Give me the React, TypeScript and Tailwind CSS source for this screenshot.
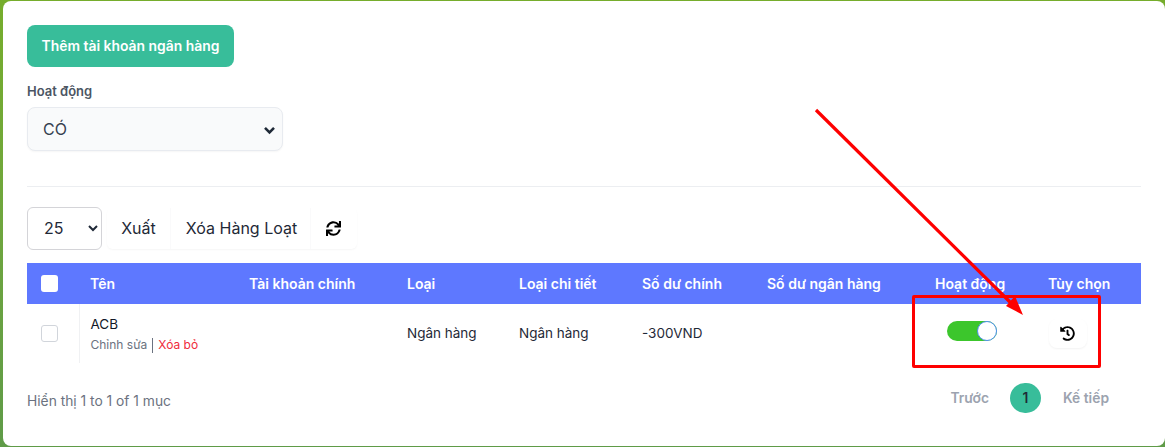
import { FaHistory, FaSync } from "react-icons/fa";

const heads = ["Tên", "Tài khoản chính", "Loại", "Loại chi tiết", "Số dư chính", "Số dư ngân hàng", "Hoạt động", "Tùy chọn"];
const widths = ["w-[158px]", "w-[158px]", "w-[112px]", "w-[123px]", "w-[125px]", "w-[168px]", "w-[114px]", "w-[104px]"];

export default function App() {
  return (
    <div className="relative h-[447px] w-[1165px] overflow-hidden pl-[3px] pt-px pb-px bg-[linear-gradient(180deg,#76ad2c_0%,#6fa63e_50%,#5f9b48_100%)] font-['Inter','Liberation_Sans',sans-serif]">
      <div className="h-full rounded-lg bg-white pl-6 pr-6 pt-6">
        <button className="h-[42px] w-[207px] rounded-lg bg-[#38bd9a] text-[13.9px] font-semibold text-white">
          Thêm tài khoản ngân hàng
        </button>
        <label className="mt-4 mb-2 block text-[13px] leading-4 font-semibold text-[#4b5563]">Hoạt động</label>
        <div className="relative w-[256px]">
          <select className="block h-[44px] w-full appearance-none rounded-lg border border-[#e8ebf0] bg-[#f9fafb] pl-[15px] pr-2 text-[16px] text-[#374151] shadow-[0_1px_2px_rgba(0,0,0,0.04)]">
            <option>CÓ</option>
          </select>
          <svg className="pointer-events-none absolute left-[236px] top-[19px]" width="13" height="9" viewBox="0 0 13 9" fill="none">
            <path d="M2 1.8 L6.5 6.3 L11 1.8" stroke="#1f2937" strokeWidth="2.6" />
          </svg>
        </div>
        <hr className="mt-[35px] border-[#eceef1]" />
        <div className="mt-5 flex items-center">
          <select className="h-[43px] w-[75px] rounded-md border border-[#d4d4d8] bg-white pl-3 pb-[2px] text-[16px] text-[#1f2937]">
            <option>25</option>
          </select>
          <div className="ml-[5px] flex h-[41px] items-center rounded-md text-[16px] text-[#1f2937] shadow-[0_1px_2px_rgba(0,0,0,0.04)]">
            <span className="flex h-full w-[64px] items-center justify-center border-r border-[#fafafb] pb-[2px]">Xuất</span>
            <span className="flex h-full w-[140px] items-center justify-center border-r border-[#fafafb] pl-[2px] pb-[2px]">Xóa Hàng Loạt</span>
            <span className="flex h-full w-[46px] items-center justify-center pr-[2px] text-black">
              <FaSync size={15} />
            </span>
          </div>
        </div>
        <table className="mt-[13px] w-[1114px] table-fixed border-collapse text-[13.5px]">
          <thead>
            <tr className="h-[41px] bg-[#5e78ff] text-left text-[14px] text-white">
              <th className="w-[52px] pl-[14px]">
                <span className="block h-[17px] w-[17px] rounded-[3px] bg-white" />
              </th>
              {heads.map((h, i) => (
                <th key={h} className={`${widths[i]} px-3 font-semibold whitespace-nowrap ${i === 0 ? "pl-[11px]" : ""} ${i === 7 ? "pl-[11px]" : ""}`}>
                  {h}
                </th>
              ))}
            </tr>
          </thead>
          <tbody>
            <tr className="h-[59px] text-[#1f2937]">
              <td className="pl-[14px]">
                <span className="block h-[17px] w-[17px] rounded-[3px] border border-[#d1d5db] bg-white" />
              </td>
              <td className="border-l border-[#f0f1f3] pl-[11px] pr-3">
                <div className="leading-5 text-[#111827]">ACB</div>
                <div className="mt-[3px] flex items-center text-[12px] leading-4">
                  <span className="text-[#6b7280]">Chỉnh sửa</span>
                  <span className="mx-[5px] h-[15px] w-px bg-[#6b7280]" />
                  <span className="text-[#ef2b3c]">Xóa bỏ</span>
                </div>
              </td>
              <td />
              <td className="px-3">Ngân hàng</td>
              <td className="px-3">Ngân hàng</td>
              <td className="px-3">-300VND</td>
              <td />
              <td className="px-3">
                <span className="relative mb-[6px] ml-3 block h-5 w-[50px] rounded-full bg-[#3cc62c]">
                  <span className="absolute top-0 right-0 h-5 w-5 rounded-full border border-[#4f8ff0] bg-white" />
                </span>
              </td>
              <td className="px-3">
                <span className="flex h-[29px] w-[38px] items-center justify-center rounded-lg bg-white pr-[2px] text-black shadow-[0_1px_2px_rgba(0,0,0,0.05)]">
                  <FaHistory size={15} />
                </span>
              </td>
            </tr>
          </tbody>
        </table>
        <div className="mt-5 flex items-start justify-between">
          <span className="mt-2 text-[13.8px] text-[#6b7280]">Hiển thị 1 to 1 of 1 mục</span>
          <div className="mr-[32px] flex items-center text-[13.8px] font-semibold text-[#9ca3af]">
            <span>Trước</span>
            <span className="mr-[22px] ml-[21px] flex h-[30px] w-[31px] items-center justify-center rounded-full bg-[#38bd9a] text-[#1f2937]">1</span>
            <span>Kế tiếp</span>
          </div>
        </div>
      </div>
      <div className="pointer-events-none absolute left-[912px] top-[295px] h-[73px] w-[189px] rounded-[2px] border-[3px] border-[#fe0000]" />
      <svg className="pointer-events-none absolute left-0 top-0" width="1165" height="447" viewBox="0 0 1165 447">
        <line x1="816" y1="110" x2="1012" y2="304" stroke="#fe0000" strokeWidth="3.2" />
        <polygon points="1023,315 1006,306 1015,296" fill="#fe0000" />
      </svg>
    </div>
  );
}
